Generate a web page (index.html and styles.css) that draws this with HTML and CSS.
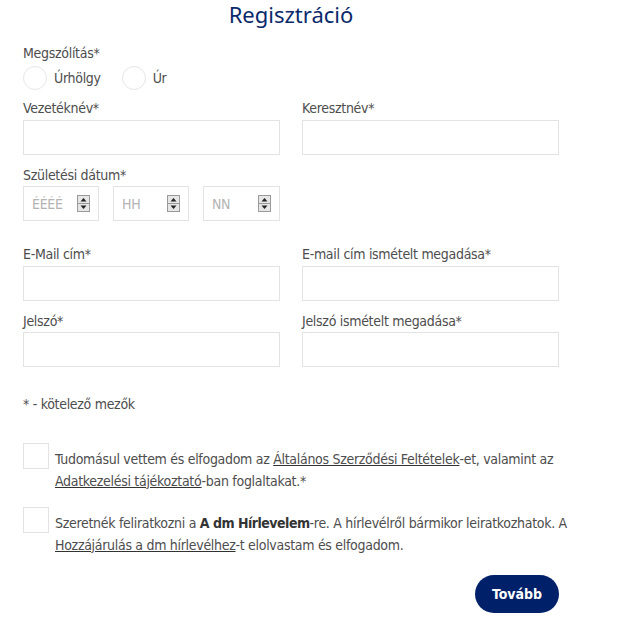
FILE: index.html
```html
<!DOCTYPE html>
<html lang="hu">
<head>
<meta charset="utf-8">
<link rel="stylesheet" href="styles.css">
</head>
<body>
<div class="page">
  <h1 class="title">Regisztráció</h1>
  <div class="label">Megszólítás*</div>
  <div class="radios">
    <span class="radio"></span><span class="radio-text">Úrhölgy</span>
    <span class="radio second"></span><span class="radio-text">Úr</span>
  </div>
  <div class="grid row1">
    <div class="field"><div class="label">Vezetéknév*</div><div class="input"></div></div>
    <div class="field"><div class="label">Keresztnév*</div><div class="input"></div></div>
  </div>
  <div class="field row2">
    <div class="label">Születési dátum*</div>
    <div class="dates">
      <div class="date"><span class="ph">ÉÉÉÉ</span><svg class="spin" width="13" height="17" viewBox="0 0 13 17"><rect x="0.5" y="0.5" width="12" height="16" fill="#e6e6e6" stroke="#9a9a9a"/><line x1="1" y1="8.5" x2="12" y2="8.5" stroke="#9a9a9a"/><path d="M3.5 6.5 L6.5 3 L9.5 6.5 Z" fill="#222"/><path d="M3.5 10.5 L6.5 14 L9.5 10.5 Z" fill="#222"/></svg></div>
      <div class="date"><span class="ph">HH</span><svg class="spin" width="13" height="17" viewBox="0 0 13 17"><rect x="0.5" y="0.5" width="12" height="16" fill="#e6e6e6" stroke="#9a9a9a"/><line x1="1" y1="8.5" x2="12" y2="8.5" stroke="#9a9a9a"/><path d="M3.5 6.5 L6.5 3 L9.5 6.5 Z" fill="#222"/><path d="M3.5 10.5 L6.5 14 L9.5 10.5 Z" fill="#222"/></svg></div>
      <div class="date"><span class="ph">NN</span><svg class="spin" width="13" height="17" viewBox="0 0 13 17"><rect x="0.5" y="0.5" width="12" height="16" fill="#e6e6e6" stroke="#9a9a9a"/><line x1="1" y1="8.5" x2="12" y2="8.5" stroke="#9a9a9a"/><path d="M3.5 6.5 L6.5 3 L9.5 6.5 Z" fill="#222"/><path d="M3.5 10.5 L6.5 14 L9.5 10.5 Z" fill="#222"/></svg></div>
    </div>
  </div>
  <div class="grid row3">
    <div class="field"><div class="label">E-Mail cím*</div><div class="input"></div></div>
    <div class="field"><div class="label">E-mail cím ismételt megadása*</div><div class="input"></div></div>
  </div>
  <div class="grid row4">
    <div class="field"><div class="label">Jelszó*</div><div class="input"></div></div>
    <div class="field"><div class="label">Jelszó ismételt megadása*</div><div class="input"></div></div>
  </div>
  <div class="label note">* - kötelező mezők</div>
  <div class="check check1">
    <span class="box"></span>
    <p class="check-text">Tudomásul vettem és elfogadom az <a class="link">Általános Szerződési Feltételek</a>-et, valamint az <a class="link">Adatkezelési tájékoztató</a>-ban foglaltakat.*</p>
  </div>
  <div class="check check2">
    <span class="box"></span>
    <p class="check-text">Szeretnék feliratkozni a <b>A dm Hírlevelem</b>-re. A hírlevélről bármikor leiratkozhatok. A <a class="link">Hozzájárulás a dm hírlevélhez</a>-t elolvastam és elfogadom.</p>
  </div>
  <div class="actions"><button class="btn">Tovább</button></div>
</div>
</body>
</html>
```
FILE: styles.css
```css
* { box-sizing: border-box; }
body {
  margin: 0;
  background: #fff;
  font-family: "DejaVu Sans Condensed", "Roboto", sans-serif;
  letter-spacing: -0.3px;
  color: #4a4a4a;
  font-size: 14px;
}
.page {
  width: 536px;
  margin-left: 23px;
}
.title {
  margin: 0;
  height: 43px;
  line-height: 28px;
  text-align: center;
  font-family: "Noto Sans", "Open Sans", sans-serif;
  font-weight: 400;
  font-size: 22px;
  letter-spacing: 0;
  color: #0a2a6b;
}
.label {
  line-height: 20px;
  font-size: 14px;
  color: #4d4d4d;
}
.radios {
  display: flex;
  align-items: center;
  height: 24px;
  margin-top: 3px;
}
.radio {
  width: 24px;
  height: 24px;
  border: 1px solid #e6e6e6;
  border-radius: 50%;
}
.radio.second { margin-left: 21px; }
.radio-text { margin-left: 7px; color: #4d4d4d; }
.grid {
  display: grid;
  grid-template-columns: 257px 257px;
  column-gap: 22px;
}
.row1 { margin-top: 8px; }
.row2 { margin-top: 10px; }
.row3 { margin-top: 23px; }
.row4 { margin-top: 10px; }
.input {
  height: 35px;
  border: 1px solid #e3e3e3;
  margin-top: 2px;
}
.row4 .input { margin-top: 1px; }
.dates {
  display: flex;
  gap: 14px;
  margin-top: 1px;
}
.date {
  width: 76px;
  height: 35px;
  border: 1px solid #e3e3e3;
  display: flex;
  align-items: center;
  justify-content: space-between;
  padding: 0 8px 0 8px;
}
.date:nth-child(3) { width: 77px; }
.ph { color: #b3b3b3; }
.spin { display: block; }
.note { margin-top: 27px; }
.check {
  display: flex;
  align-items: flex-start;
}
.check1 { margin-top: 29px; }
.check2 { margin-top: 15px; }
.box {
  flex: none;
  width: 26px;
  height: 26px;
  border: 1px solid #e3e3e3;
}
.check-text {
  margin: 6px -14px 0 6px;
  line-height: 21.5px;
  color: #4d4d4d;
}
.link {
  color: #4d4d4d;
  text-decoration: underline;
  text-decoration-color: #333;
}
.check-text b { color: #333; letter-spacing: -0.5px; }
.actions {
  display: flex;
  justify-content: flex-end;
  margin-top: 19px;
}
.btn {
  width: 84px;
  height: 38px;
  border: none;
  border-radius: 19px;
  background: #002169;
  color: #fff;
  font-family: inherit;
  font-weight: 700;
  font-size: 14px;
  letter-spacing: 0;
}
```
